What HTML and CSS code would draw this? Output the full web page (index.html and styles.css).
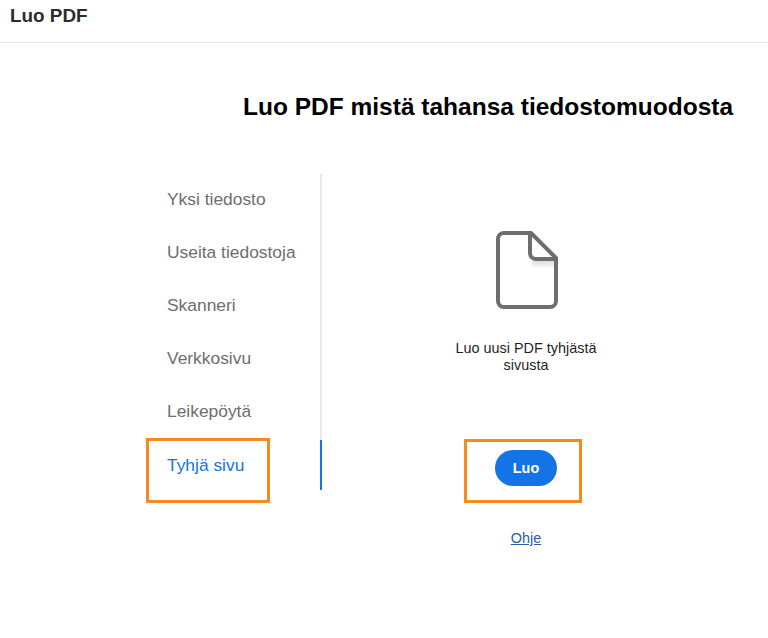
FILE: index.html
```html
<!DOCTYPE html>
<html lang="fi">
<head>
  <meta charset="UTF-8" />
  <title>Luo PDF</title>
  <link rel="stylesheet" href="styles.css">
</head>
<body>
  <header class="topbar">Luo PDF</header>

  <main class="page">
    <h1>Luo PDF mistä tahansa tiedostomuodosta</h1>

    <div class="panel">
      <nav class="tabs">
        <div class="tab">Yksi tiedosto</div>
        <div class="tab">Useita tiedostoja</div>
        <div class="tab">Skanneri</div>
        <div class="tab">Verkkosivu</div>
        <div class="tab">Leikepöytä</div>
        <div class="tab active">Tyhjä sivu<span class="marker tab-marker"></span></div>
      </nav>

      <section class="blank">
        <!-- blank page icon -->
        <svg class="doc-icon" width="62" height="78" viewBox="0 0 62 78" fill="none">
          <defs>
            <linearGradient id="foldShadow" x1="0" y1="0" x2="0" y2="1">
              <stop offset="0" stop-color="#dedede" />
              <stop offset="1" stop-color="#fafafa" />
            </linearGradient>
          </defs>
          <rect x="36" y="30" width="24" height="7" fill="url(#foldShadow)" />
          <path d="M33 2 H8 A6 6 0 0 0 2 8 V70 A6 6 0 0 0 8 76 H54 A6 6 0 0 0 60 70 V27 L35 2 Z" stroke="#6e6e6e" stroke-width="4" stroke-linejoin="round" />
          <path d="M34 2 V22 A6 6 0 0 0 40 28 H60" stroke="#6e6e6e" stroke-width="4" stroke-linecap="round" />
        </svg>
        <p class="blank-text">Luo uusi PDF tyhjästä sivusta</p>
        <div class="action">
          <button type="button">Luo</button>
          <span class="marker button-marker"></span>
        </div>
        <a class="help" href="#">Ohje</a>
      </section>
    </div>
  </main>
</body>
</html>
```

FILE: styles.css
```css
body {
  margin: 0;
  background: #fff;
  color: #000;
  font-family: "Liberation Sans", Arial, sans-serif;
}
.topbar {
  height: 43px;
  box-sizing: border-box;
  padding: 6px 10px 0;
  border-bottom: 1px solid #e4e4e4;
  color: #2c2c2c;
  font-size: 18.900px;
  font-weight: 700;
  line-height: 20px;
}
.page {
  padding-left: 147px;
}
h1 {
  margin: 50px 0 0 96px;
  font-size: 24.500px;
  font-weight: 700;
  line-height: 28px;
  white-space: nowrap;
}
.panel {
  display: flex;
  margin-top: 54px;
}
.tabs {
  width: 173px;
  height: 315px;
  margin-top: -1px;
  border-right: 2px solid #e8e8e8;
}
.tab {
  position: relative;
  height: 53px;
  box-sizing: border-box;
  padding: 15px 0 0 20px;
  color: #6e6e6e;
  font-size: 17.400px;
  line-height: 20px;
}
.tab.active {
  padding-top: 16px;
  color: #1473e6;
}
.tab.active::after {
  content: "";
  position: absolute;
  right: -2px;
  top: 1px;
  width: 2px;
  height: 50px;
  background: #1473e6;
}
.marker {
  position: absolute;
  box-sizing: border-box;
  border: 3px solid #f58a1f;
}
.tab-marker {
  left: -1px;
  top: -1px;
  width: 124px;
  height: 65px;
}
.blank {
  display: flex;
  flex-direction: column;
  align-items: center;
  width: 176px;
  margin-left: 116px;
  padding-top: 56px;
}
.doc-icon {
  display: block;
  margin-left: 2px;
}
.blank-text {
  width: 172px;
  margin: 31px 0 0;
  color: #1f1f1f;
  font-size: 14.400px;
  line-height: 17px;
  text-align: center;
}
.action {
  position: relative;
  margin-top: 76px;
}
button {
  display: block;
  width: 62px;
  height: 36px;
  padding: 0;
  border: none;
  border-radius: 18px;
  background: #1473e6;
  color: #fff;
  font-family: inherit;
  font-size: 14.400px;
  font-weight: 700;
}
.button-marker {
  left: -31px;
  top: -11px;
  width: 118px;
  height: 64px;
}
.help {
  margin-top: 44px;
  color: #2a5ca8;
  font-size: 14.400px;
  line-height: 17px;
}
```
